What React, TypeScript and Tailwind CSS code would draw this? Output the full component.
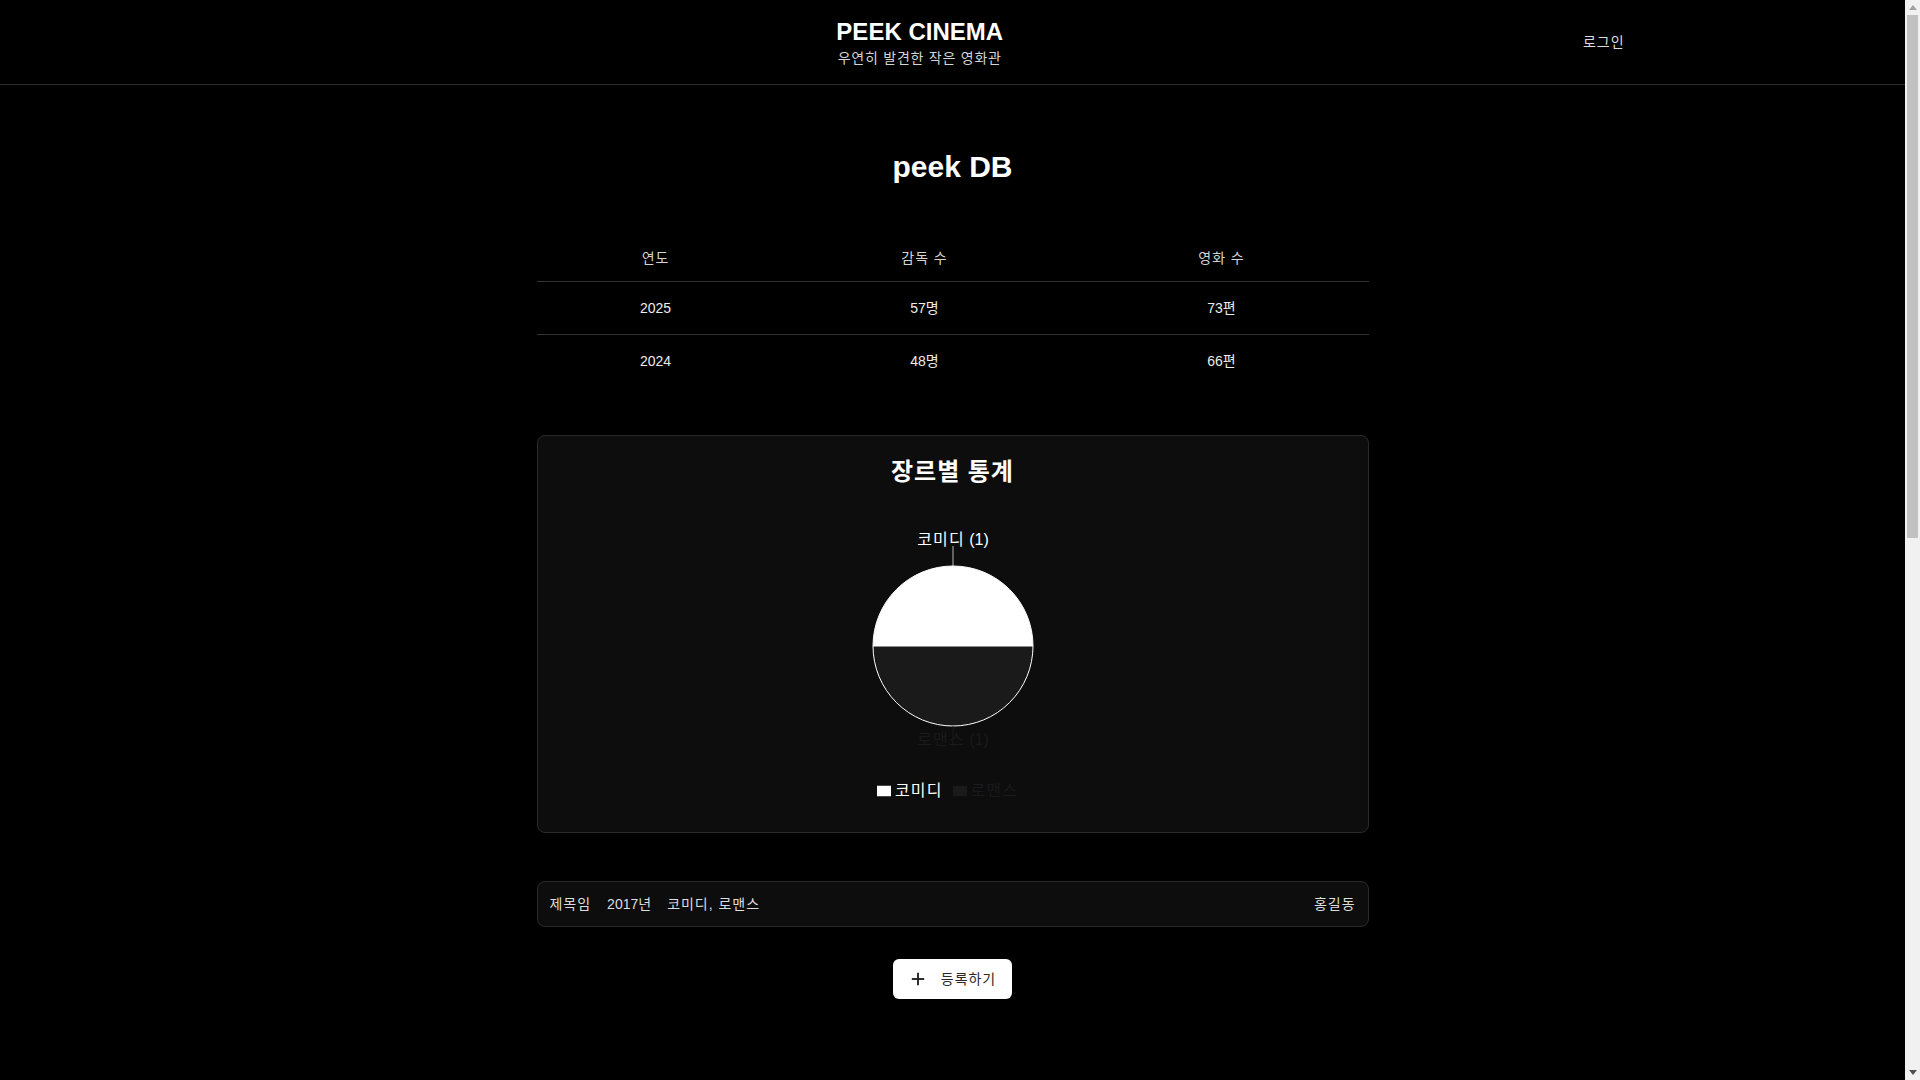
import React from 'react';

const FONT = "font-['Liberation_Sans','Noto_Sans_CJK_KR',sans-serif]";

const stats = [
  { year: '2025', directors: '57명', movies: '73편' },
  { year: '2024', directors: '48명', movies: '66편' },
];

const genres = [
  { name: '코미디', count: 1, color: '#ffffff' },
  { name: '로맨스', count: 1, color: '#1a1a1a' },
];

// hangul in the shot runs a bit wider than the local CJK font
const K: React.FC<{ children: React.ReactNode }> = ({ children }) => (
  <span className="tracking-[0.07em]">{children}</span>
);

const GenrePie: React.FC = () => {
  // half / half pie, center (150,146), r 80
  return (
    <svg width={300} height={260} viewBox="0 0 300 260" className="block mx-auto">
      <path d="M70 146 A80 80 0 0 1 230 146 Z" fill="#ffffff" stroke="#ffffff" strokeWidth={1} />
      <path d="M230 146 A80 80 0 0 1 70 146 Z" fill="#1a1a1a" stroke="#ffffff" strokeWidth={1} />
      <line x1={150} y1={66} x2={150} y2={46} stroke="#ffffff" strokeWidth={1} opacity={0.7} />
      <line x1={150} y1={226} x2={150} y2={246} stroke="#1a1a1a" strokeWidth={1} />
      <text x={150} y={45} textAnchor="middle" fill="#ffffff" fontSize={16}>
        <tspan letterSpacing="1.1">코미디</tspan> (1)
      </text>
      <text x={150} y={245} textAnchor="middle" fill="#1a1a1a" fontSize={16}>
        <tspan letterSpacing="1.1">로맨스</tspan> (1)
      </text>
    </svg>
  );
};

// page scrollbar as it shows in the screenshot
const ScrollBar: React.FC = () => (
  <div className="w-[15px] h-full bg-[#f1f1f1] flex flex-col shrink-0">
    <div className="h-[15px] flex items-center justify-center">
      <svg width={8} height={5} viewBox="0 0 8 5">
        <path d="M0 5 L4 0 L8 5 Z" fill="#a3a3a3" />
      </svg>
    </div>
    <div className="mx-[2px] h-[523px] bg-[#c1c1c1]" />
    <div className="flex-1" />
    <div className="h-[15px] flex items-center justify-center">
      <svg width={8} height={5} viewBox="0 0 8 5">
        <path d="M0 0 L8 0 L4 5 Z" fill="#505050" />
      </svg>
    </div>
  </div>
);

const App: React.FC = () => {
  return (
    <div className={`h-screen flex overflow-hidden bg-black text-white ${FONT}`}>
      <div className="flex-1 min-w-0 overflow-hidden">
        {/* Header */}
        <header className="border-b border-[#2a2a2a]">
          <div className="max-w-[1400px] mx-auto px-4 py-4 flex items-center justify-between">
            <div />
            <div className="text-center">
              <h1 className="text-2xl leading-8 font-bold text-white">PEEK CINEMA</h1>
              <p className="text-sm leading-5 text-[#d4d4d4]">
                <span className="tracking-[0.055em]">우연히 발견한 작은 영화관</span>
              </p>
            </div>
            <button className="px-3 py-2 text-sm leading-5 text-[#dcdcdc]">
              <K>로그인</K>
            </button>
          </div>
        </header>

        <main className="max-w-[832px] mx-auto pt-16">
          <h2 className="text-3xl leading-9 font-bold text-center text-white">peek DB</h2>

          {/* Stats table */}
          <table className="w-full table-fixed mt-12 text-sm leading-5">
            <colgroup>
              <col className="w-[238px]" />
              <col className="w-[300px]" />
              <col className="w-[294px]" />
            </colgroup>
            <thead>
              <tr className="border-b border-[#333333]">
                <th className="pt-[15px] pb-[13px] font-normal text-[#d4d4d4]"><K>연도</K></th>
                <th className="pt-[15px] pb-[13px] font-normal text-[#d4d4d4]"><K>감독 수</K></th>
                <th className="pt-[15px] pb-[13px] font-normal text-[#d4d4d4]"><K>영화 수</K></th>
              </tr>
            </thead>
            <tbody>
              {stats.map((s, i) => (
                <tr key={s.year} className={i < stats.length - 1 ? 'border-b border-[#333333]' : ''}>
                  <td className="py-4 text-center text-[#ececec]">{s.year}</td>
                  <td className="py-4 text-center text-[#ececec]">{s.directors}</td>
                  <td className="py-4 text-center text-[#ececec]">{s.movies}</td>
                </tr>
              ))}
            </tbody>
          </table>

          {/* Genre chart */}
          <section className="mt-12 bg-[#0d0d0d] border border-[#2a2a2a] rounded-lg px-5 pt-5 pb-[29px]">
            <h3 className="text-2xl leading-8 font-bold text-center text-white">
              <span className="tracking-[0.04em]">장르별 통계</span>
            </h3>
            <div className="mt-3">
              <GenrePie />
            </div>
            <ul className="mt-[19px] flex justify-center text-base leading-6">
              {genres.map((g) => (
                <li key={g.name} className="flex items-center mr-[10px]" style={{ color: g.color }}>
                  <svg width={14} height={14} viewBox="0 0 32 32" className="mr-1">
                    <path d="M0,4h32v24h-32z" fill={g.color} />
                  </svg>
                  <K>{g.name}</K>
                </li>
              ))}
            </ul>
          </section>

          {/* Movie list */}
          <div className="mt-12 bg-[#0d0d0d] border border-[#2a2a2a] rounded-lg px-3 py-3 flex items-center justify-between text-sm leading-5 text-[#dedede]">
            <div className="flex items-center gap-4">
              <K>제목임</K>
              <span>2017년</span>
              <K>코미디, 로맨스</K>
            </div>
            <K>홍길동</K>
          </div>

          <div className="mt-8 flex justify-center">
            <button className="h-10 px-4 flex items-center gap-3.5 bg-white rounded-md text-sm leading-5 text-[#2a2a2a]">
              <svg width={18} height={18} viewBox="0 0 24 24" fill="none" stroke="#222" strokeWidth={2.5} strokeLinecap="square">
                <path d="M5 12h14" />
                <path d="M12 5v14" />
              </svg>
              <K>등록하기</K>
            </button>
          </div>
        </main>
      </div>
      <ScrollBar />
    </div>
  );
};

export default App;
